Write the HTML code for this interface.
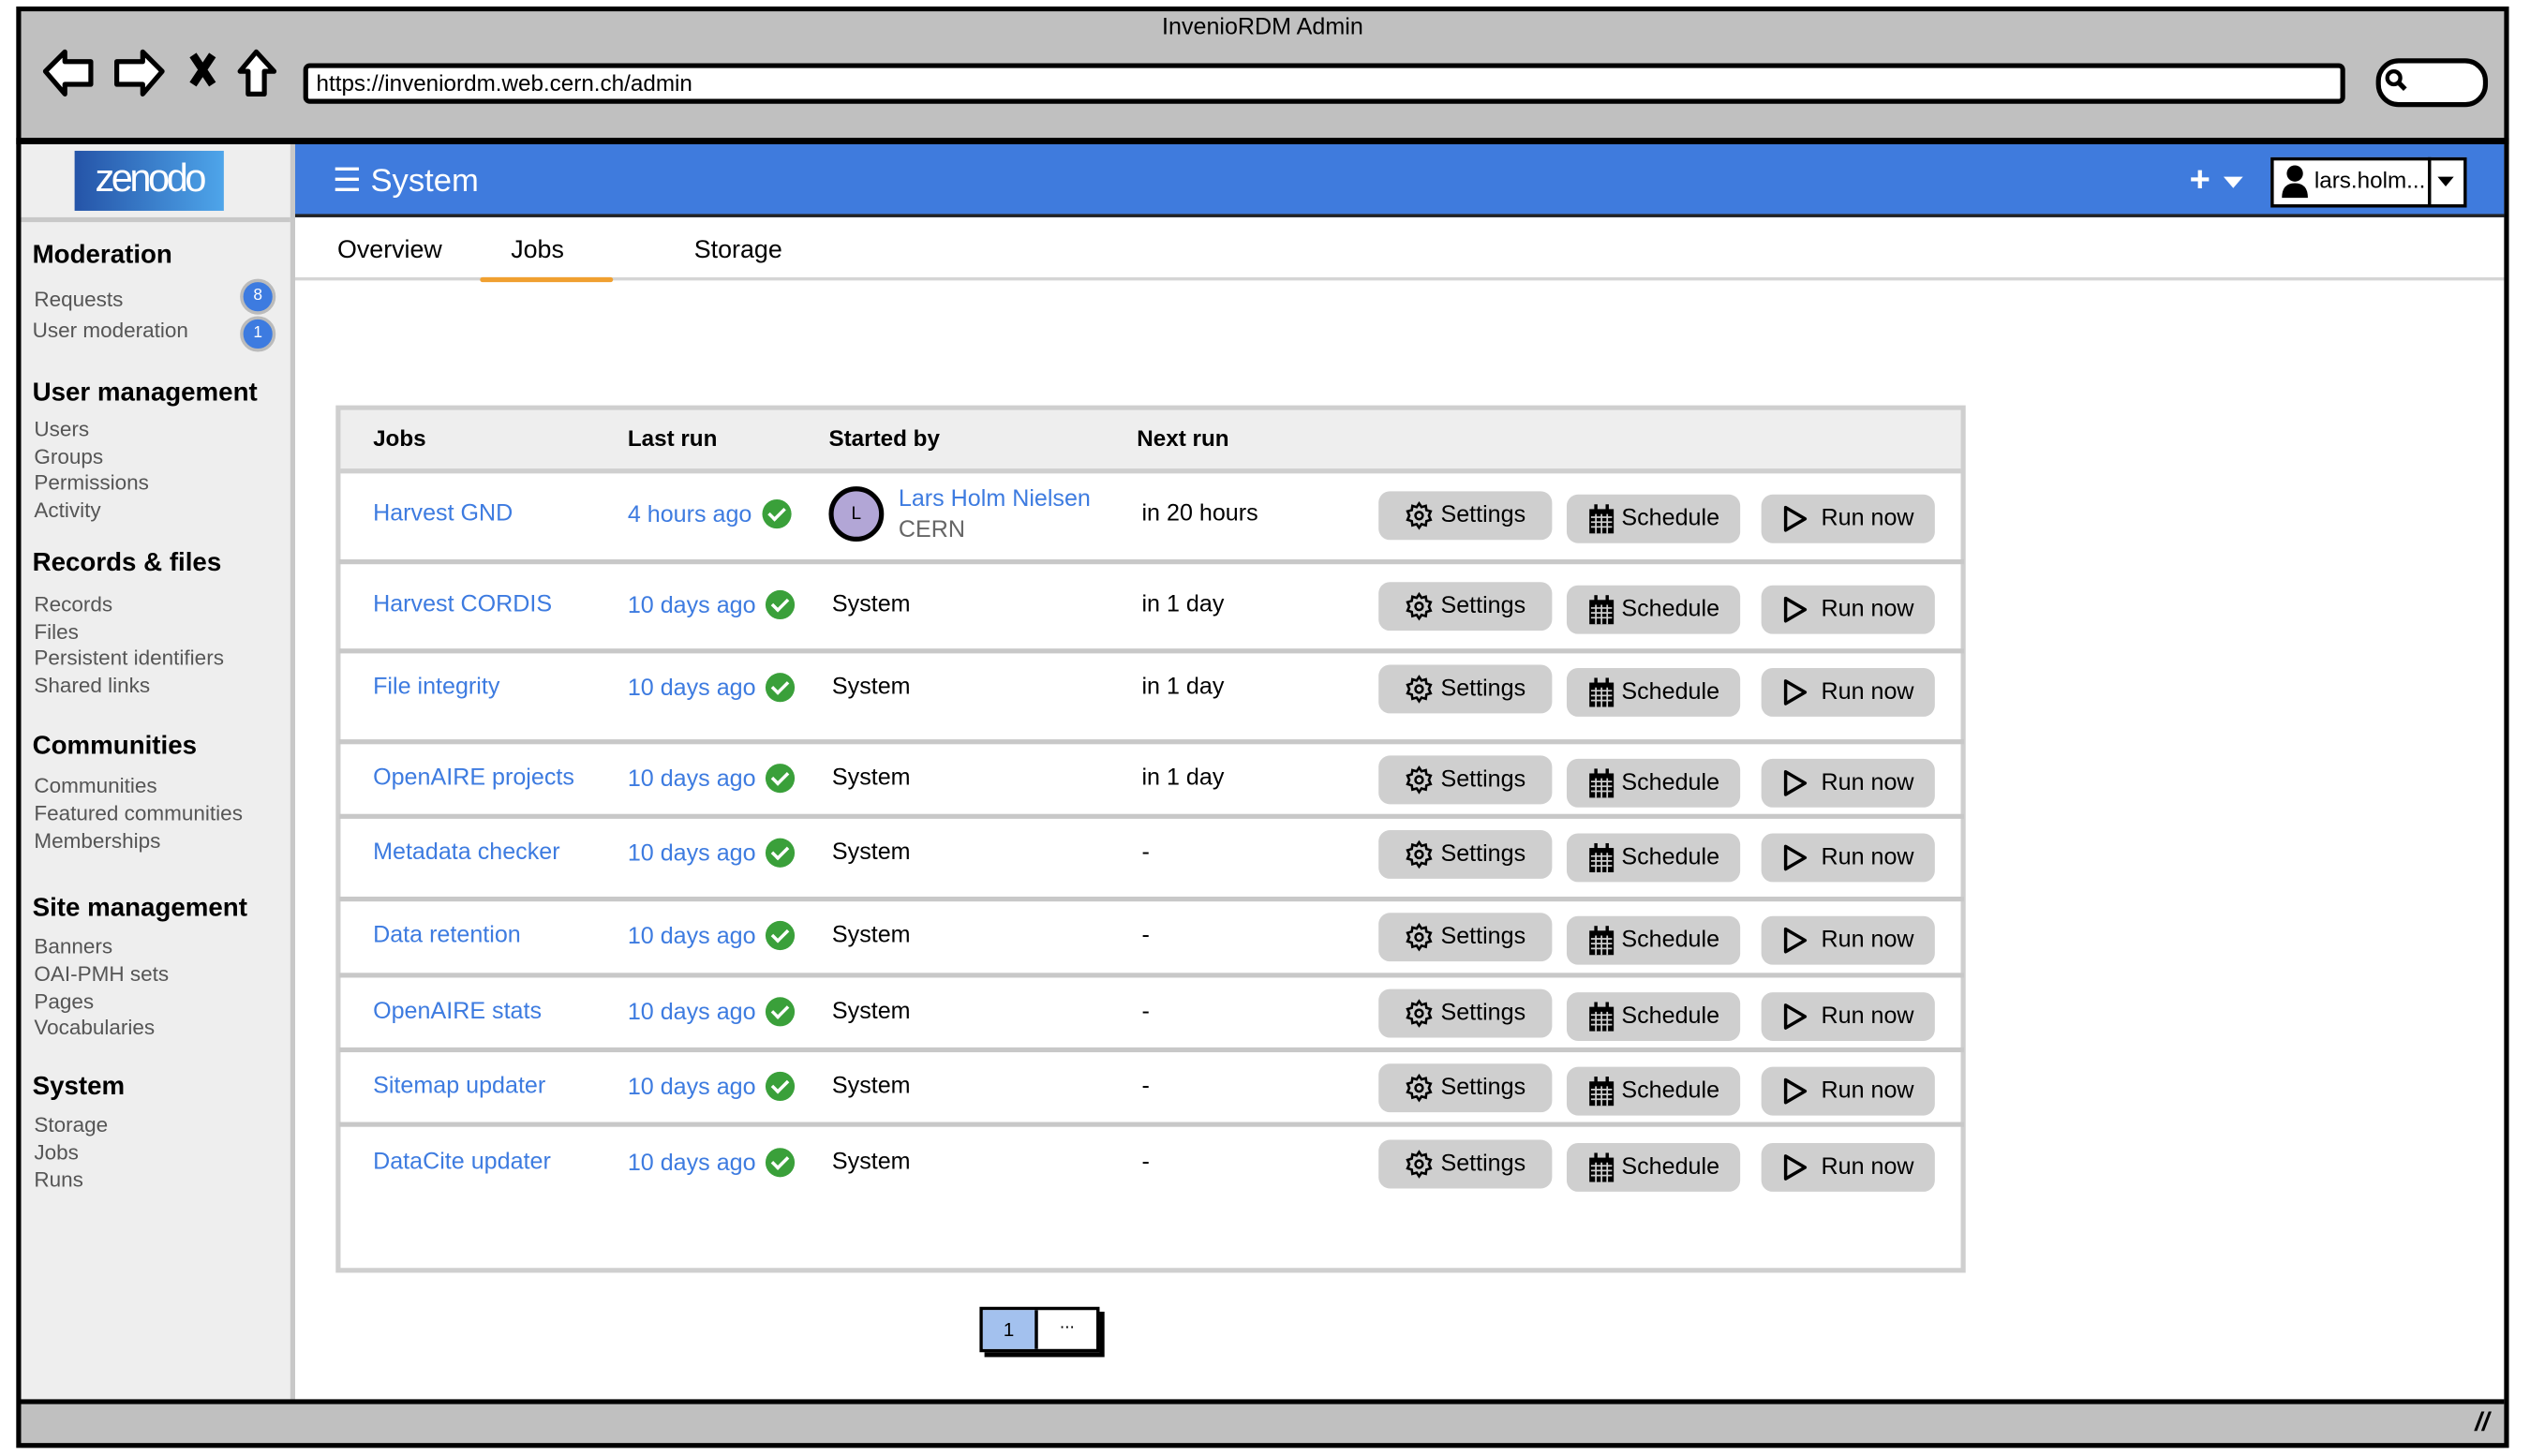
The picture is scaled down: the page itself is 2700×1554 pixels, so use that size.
<!DOCTYPE html>
<html><head><meta charset="utf-8"><style>
html,body{margin:0;padding:0;width:2700px;height:1554px;overflow:hidden;background:#fff}
#s{position:absolute;left:0;top:0;width:1560px;height:898px;transform:scale(1.7308,1.7305);transform-origin:0 0;font-family:"Liberation Sans",sans-serif;color:#000}
.a{position:absolute;white-space:nowrap}
.lk{color:#3d7be0}
.sb{font-size:13px;color:#555}
.sh{font-size:16px;font-weight:bold}
.btn{position:absolute;height:30px;background:#cfcfcf;border-radius:7px;font-size:14.5px;display:flex;align-items:center;justify-content:center;gap:4px}
.chk{display:inline-block;width:18px;height:18px;border-radius:50%;background:#3aa03a;vertical-align:middle;margin-left:6px;position:relative;top:-1px}
.chk:after{content:"";position:absolute;left:6px;top:3px;width:4px;height:8px;border:solid #fff;border-width:0 2px 2px 0;transform:rotate(45deg)}
.rl{position:absolute;left:209px;width:1002px;height:3px;background:#c8c8c8}
.cell{font-size:14.5px}
</style></head><body><div id="s">
<div class="a" style="left:13px;top:7px;width:1531px;height:80px;background:#c0c0c0"></div>
<div class="a" style="left:10px;top:85px;width:1537px;height:4px;background:#000"></div>
<div class="a" style="left:0;top:9px;width:1557px;text-align:center;font-size:14.5px">InvenioRDM Admin</div>
<svg class="a" style="left:24px;top:28px" width="155" height="34" viewBox="0 0 155 34" fill="none" stroke="#000" stroke-width="3" stroke-linejoin="round">
<path d="M4 16 L16 4 L16 10 L32 10 L32 24 L16 24 L16 30 Z" fill="#fff"/>
<path d="M76 16 L64 4 L64 10 L48 10 L48 24 L64 24 L64 30 Z" fill="#fff"/>
<path d="M95 6 L107 24 M107 6 L95 24" stroke-width="5"/>
<path d="M134 4 L124 16 L129 16 L129 30 L139 30 L139 16 L145 16 Z" fill="#fff"/>
</svg>
<div class="a" style="left:187px;top:39px;width:1248px;height:19px;background:#fff;border:3px solid #000;border-radius:4px;font-size:14px;line-height:19px;padding-left:5px;box-sizing:content-box">https://inveniordm.web.cern.ch/admin</div>
<div class="a" style="left:1465px;top:36px;width:63px;height:24px;background:#fff;border:3px solid #000;border-radius:14px"></div>
<svg class="a" style="left:1470px;top:42px" width="16" height="16"><circle cx="6" cy="6" r="4" fill="none" stroke="#000" stroke-width="2.5"/><path d="M9 9 L13 13" stroke="#000" stroke-width="3"/></svg>
<!-- sidebar -->
<div class="a" style="left:13px;top:89px;width:166px;height:774px;background:#eee;border-right:3px solid #c8c8c8"></div>
<div class="a" style="left:46px;top:93px;width:92px;height:37px;background:linear-gradient(90deg,#2554a8,#4ea5ea);color:#fff;font-size:24px;letter-spacing:-2px;text-align:center;line-height:36px">zenodo</div>
<div class="a" style="left:13px;top:134px;width:166px;height:3px;background:#c8c8c8"></div>
<div class="a sh" style="left:20px;top:149px">Moderation</div>
<div class="a sb" style="left:21px;top:177px">Requests</div>
<div class="a sb" style="left:20px;top:196px">User moderation</div>
<div class="a" style="left:148px;top:172px;width:18px;height:18px;border-radius:50%;background:#3d7be0;border:2px solid #bbb;color:#fff;font-size:10px;text-align:center;line-height:18px">8</div>
<div class="a" style="left:148px;top:195px;width:18px;height:18px;border-radius:50%;background:#3d7be0;border:2px solid #bbb;color:#fff;font-size:10px;text-align:center;line-height:18px">1</div>
<div class="a sh" style="left:20px;top:234px">User management</div>
<div class="a sb" style="left:21px;top:257px">Users</div>
<div class="a sb" style="left:21px;top:274px">Groups</div>
<div class="a sb" style="left:21px;top:290px">Permissions</div>
<div class="a sb" style="left:21px;top:307px">Activity</div>
<div class="a sh" style="left:20px;top:339px">Records &amp; files</div>
<div class="a sb" style="left:21px;top:365px">Records</div>
<div class="a sb" style="left:21px;top:382px">Files</div>
<div class="a sb" style="left:21px;top:398px">Persistent identifiers</div>
<div class="a sb" style="left:21px;top:415px">Shared links</div>
<div class="a sh" style="left:20px;top:452px">Communities</div>
<div class="a sb" style="left:21px;top:477px">Communities</div>
<div class="a sb" style="left:21px;top:494px">Featured communities</div>
<div class="a sb" style="left:21px;top:511px">Memberships</div>
<div class="a sh" style="left:20px;top:552px">Site management</div>
<div class="a sb" style="left:21px;top:576px">Banners</div>
<div class="a sb" style="left:21px;top:593px">OAI-PMH sets</div>
<div class="a sb" style="left:21px;top:610px">Pages</div>
<div class="a sb" style="left:21px;top:626px">Vocabularies</div>
<div class="a sh" style="left:20px;top:662px">System</div>
<div class="a sb" style="left:21px;top:686px">Storage</div>
<div class="a sb" style="left:21px;top:703px">Jobs</div>
<div class="a sb" style="left:21px;top:720px">Runs</div>
<!-- header -->
<div class="a" style="left:182px;top:89px;width:1362px;height:43px;background:#3f7bdd;border-bottom:2px solid #222"></div>
<div class="a" style="left:205px;top:99px;color:#fff;font-size:20px">☰ System</div>
<div class="a" style="left:1350px;top:98px;color:#fff;font-size:22px;font-weight:bold">+</div>
<div class="a" style="left:1371px;top:109px;width:0;height:0;border-left:6px solid transparent;border-right:6px solid transparent;border-top:7px solid #fff"></div>
<div class="a" style="left:1400px;top:97px;width:117px;height:27px;background:#fff;border:2px solid #000"></div>
<div class="a" style="left:1497px;top:97px;width:2px;height:31px;background:#000"></div>
<div class="a" style="left:1503px;top:109px;width:0;height:0;border-left:5px solid transparent;border-right:5px solid transparent;border-top:6px solid #000"></div>
<svg class="a" style="left:1406px;top:101px" width="18" height="22"><circle cx="9" cy="6" r="5"/><path d="M1 21 Q1 12 9 12 Q17 12 17 21 Z"/></svg>
<div class="a" style="left:1427px;top:103px;font-size:14px">lars.holm...</div>
<!-- tabs -->
<div class="a" style="left:208px;top:146px;font-size:15.5px">Overview</div>
<div class="a" style="left:315px;top:146px;font-size:15.5px">Jobs</div>
<div class="a" style="left:428px;top:146px;font-size:15.5px">Storage</div>
<div class="a" style="left:182px;top:171px;width:1362px;height:2px;background:#d5d5d5"></div>
<div class="a" style="left:296px;top:171px;width:82px;height:3px;background:#f0a030;border-radius:2px"></div>
<!-- table -->
<div class="a" style="left:207px;top:250px;width:999px;height:529px;border:3px solid #cfcfcf"></div>
<div class="a" style="left:210px;top:253px;width:999px;height:36px;background:#eee;border-bottom:3px solid #cfcfcf"></div>
<div class="a" style="left:230px;top:262px;font-size:14px;font-weight:bold">Jobs</div>
<div class="a" style="left:387px;top:262px;font-size:14px;font-weight:bold">Last run</div>
<div class="a" style="left:511px;top:262px;font-size:14px;font-weight:bold">Started by</div>
<div class="a" style="left:701px;top:262px;font-size:14px;font-weight:bold">Next run</div>
<div class="rl" style="top:345px"></div><div class="rl" style="top:400px"></div><div class="rl" style="top:456px"></div><div class="rl" style="top:502px"></div><div class="rl" style="top:553px"></div><div class="rl" style="top:600px"></div><div class="rl" style="top:646px"></div><div class="rl" style="top:692px"></div>
<div class="a" style="left:511px;top:300px;width:28px;height:28px;border:3px solid #000;border-radius:50%;background:#b2a6d6;font-size:11px;text-align:center;line-height:28px">L</div>
<div class="a lk" style="left:554px;top:300px;font-size:14.5px">Lars Holm Nielsen</div>
<div class="a" style="left:554px;top:319px;font-size:14.5px;color:#666">CERN</div>
<div id="rows"></div>
<!-- pagination -->
<div class="a" style="left:604px;top:806px;width:70px;height:24px;border:2px solid #000;box-shadow:3px 3px 0 #000;background:#fff"></div>
<div class="a" style="left:606px;top:808px;width:32px;height:24px;background:#a3c1ee;border-right:2px solid #000;font-size:12px;text-align:center;line-height:24px">1</div>
<div class="a" style="left:640px;top:810px;width:36px;font-size:11px;text-align:center">...</div>
<!-- bottom bar -->
<div class="a" style="left:13px;top:863px;width:1531px;height:27px;background:#c0c0c0;border-top:3px solid #000"></div>
<div class="a" style="left:1526px;top:869px;font-size:16px;font-weight:bold;font-style:italic">//</div>
<!-- outer frame -->
<div class="a" style="left:10px;top:4px;width:1531px;height:883px;border:3px solid #000;"></div>
</div>
<script>
var R=[["Harvest GND","4 hours ago",null,"in 20 hours",318],["Harvest CORDIS","10 days ago","System","in 1 day",374],["File integrity","10 days ago","System","in 1 day",425],["OpenAIRE projects","10 days ago","System","in 1 day",481],["Metadata checker","10 days ago","System","-",527],["Data retention","10 days ago","System","-",578],["OpenAIRE stats","10 days ago","System","-",625],["Sitemap updater","10 days ago","System","-",671],["DataCite updater","10 days ago","System","-",718]];
var gear='<svg width="18" height="18" viewBox="0 0 24 24" fill="none" stroke="#000" stroke-width="2"><circle cx="12" cy="12" r="3"/><path d="M12 2l2 3 3.5-1 .5 3.5 3.5 1-1.5 3.5 1.5 3.5-3.5 1-.5 3.5-3.5-1-2 3-2-3-3.5 1-.5-3.5-3.5-1L4 12 2.5 8.5 6 7.5 6.5 4 10 5z"/></svg>';
var cal='<svg width="17" height="19" viewBox="0 0 17 19"><rect x="1" y="3" width="15" height="15"/><rect x="4" y="0" width="2" height="4"/><rect x="11" y="0" width="2" height="4"/><path d="M2 8H15M2 11H15M2 14H15M5 6V18M8.5 6V18M12 6V18" stroke="#cfcfcf" stroke-width="1"/></svg>';
var play='<svg width="16" height="18" viewBox="0 0 16 18"><path d="M2 2L14 9L2 16Z" fill="none" stroke="#000" stroke-width="2" stroke-linejoin="round"/></svg>';
var h="";
R.forEach(function(r){var y=r[4];
h+='<div class="a lk cell" style="left:230px;top:'+(y-9)+'px">'+r[0]+'</div>';
h+='<div class="a lk cell" style="left:387px;top:'+(y-9)+'px">'+r[1]+'<span class="chk"></span></div>';
if(r[2])h+='<div class="a cell" style="left:513px;top:'+(y-9)+'px">'+r[2]+'</div>';
h+='<div class="a cell" style="left:704px;top:'+(y-9)+'px">'+r[3]+'</div>';
h+='<div class="btn" style="left:850px;top:'+(y-15)+'px;width:107px">'+gear+'Settings</div>';
h+='<div class="btn" style="left:966px;top:'+(y-13)+'px;width:107px">'+cal+'Schedule</div>';
h+='<div class="btn" style="left:1086px;top:'+(y-13)+'px;width:107px">'+play+'&nbsp;Run now</div>';
});
document.getElementById("rows").outerHTML=h;
</script>
</body></html>
